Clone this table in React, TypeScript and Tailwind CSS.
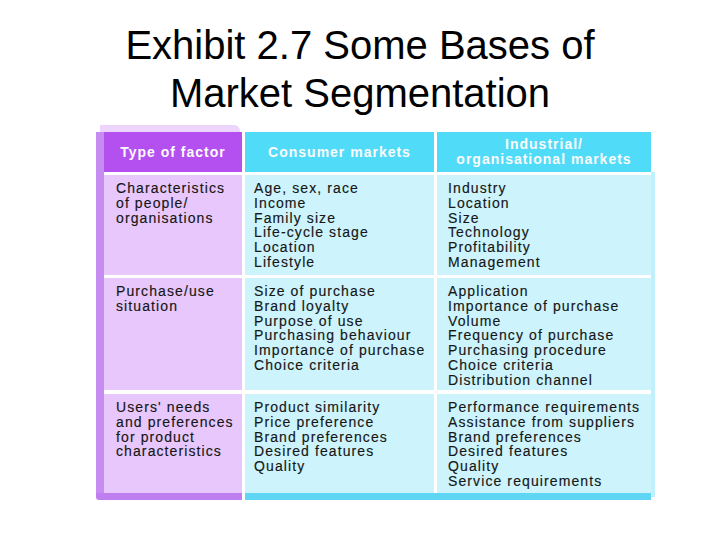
const rows = [
  {
    factor: ["Characteristics", "of people/", "organisations"],
    consumer: ["Age, sex, race", "Income", "Family size", "Life-cycle stage", "Location", "Lifestyle"],
    industrial: ["Industry", "Location", "Size", "Technology", "Profitability", "Management"],
    h: "h-[100px]",
  },
  {
    factor: ["Purchase/use", "situation"],
    consumer: [
      "Size of purchase",
      "Brand loyalty",
      "Purpose of use",
      "Purchasing behaviour",
      "Importance of purchase",
      "Choice criteria",
    ],
    industrial: [
      "Application",
      "Importance of purchase",
      "Volume",
      "Frequency of purchase",
      "Purchasing procedure",
      "Choice criteria",
      "Distribution channel",
    ],
    h: "h-[112px]",
  },
  {
    factor: ["Users' needs", "and preferences", "for product", "characteristics"],
    consumer: ["Product similarity", "Price preference", "Brand preferences", "Desired features", "Quality"],
    industrial: [
      "Performance requirements",
      "Assistance from suppliers",
      "Brand preferences",
      "Desired features",
      "Quality",
      "Service requirements",
    ],
    h: "h-[99px]",
  },
]

function Lines({ items }: { items: string[] }) {
  return (
    <>
      {items.map((t) => (
        <div key={t} className="whitespace-nowrap">
          {t}
        </div>
      ))}
    </>
  )
}

const headText = "font-bold text-[#fbfbfb] text-[14px] leading-[15px] tracking-[1px] text-center"
const bodyText =
  "text-[14px] leading-[14.8px] tracking-[1.1px] text-[#161616] [-webkit-text-stroke:0.15px_#161616]"

export default function App() {
  return (
    <main
      className="w-[720px] h-[540px] bg-white overflow-hidden"
      style={{ fontFamily: '"Liberation Sans", Arial, sans-serif' }}
    >
      {/* Title */}
      <h1 className="pt-[21px] text-center text-[40px] leading-[48px] text-black font-normal">
        Exhibit 2.7 Some Bases of
        <br />
        Market Segmentation
      </h1>

      {/* Table */}
      <section className="mt-[8px] ml-[96px] flex">
        {/* Type of factor column, with 3D bevel on left/top/bottom */}
        <div className="w-[146px] flex flex-col">
          <div className="h-[7px] ml-[4px] mr-[2px] rounded-tr-[6px] bg-[#ecd4fa]" />
          <div className="flex border-l-[8px] border-[#c78cf1]">
            <div className="flex-1 flex flex-col gap-[3px] bg-white">
              <div className={"h-[40px] bg-[#b44ff0] flex items-center justify-center " + headText}>
                Type of factor
              </div>
              {rows.map((r, i) => (
                <div
                  key={i}
                  className={r.h + " bg-[#e8c8fc] pl-[12px] pt-[6px] " + bodyText + (i === 2 ? " mt-[1px]" : "")}
                >
                  <Lines items={r.factor} />
                </div>
              ))}
            </div>
          </div>
          <div className="h-[7px] bg-[#c07ff0] rounded-bl-[3px]" />
        </div>

        {/* Market columns */}
        <div className="ml-[3px] mt-[7px] flex">
          <div className="flex flex-col">
            <div className="flex gap-[3px]">
              {[
                { w: "w-[189px]", head: ["Consumer markets"], key: "consumer" as const, pl: "pl-[9px]" },
                { w: "w-[214px]", head: ["Industrial/", "organisational markets"], key: "industrial" as const, pl: "pl-[11px]" },
              ].map((c) => (
                <div key={c.key} className={c.w + " flex flex-col gap-[3px]"}>
                  <div className={"h-[40px] bg-[#50dbf9] flex flex-col items-center justify-center " + headText}>
                    <Lines items={c.head} />
                  </div>
                  {rows.map((r, i) => (
                    <div
                      key={i}
                      className={r.h + " bg-[#cdf4fc] pt-[6px] " + c.pl + " " + bodyText + (i === 2 ? " mt-[1px]" : "")}
                    >
                      <Lines items={r[c.key]} />
                    </div>
                  ))}
                </div>
              ))}
            </div>
            <div className="h-[7px] bg-[#5fd6f3]" />
          </div>
          {/* right bevel */}
          <div className="w-[4px] mt-[40px] mb-[3px] bg-[#bff0fb]" />
        </div>
      </section>
    </main>
  )
}
